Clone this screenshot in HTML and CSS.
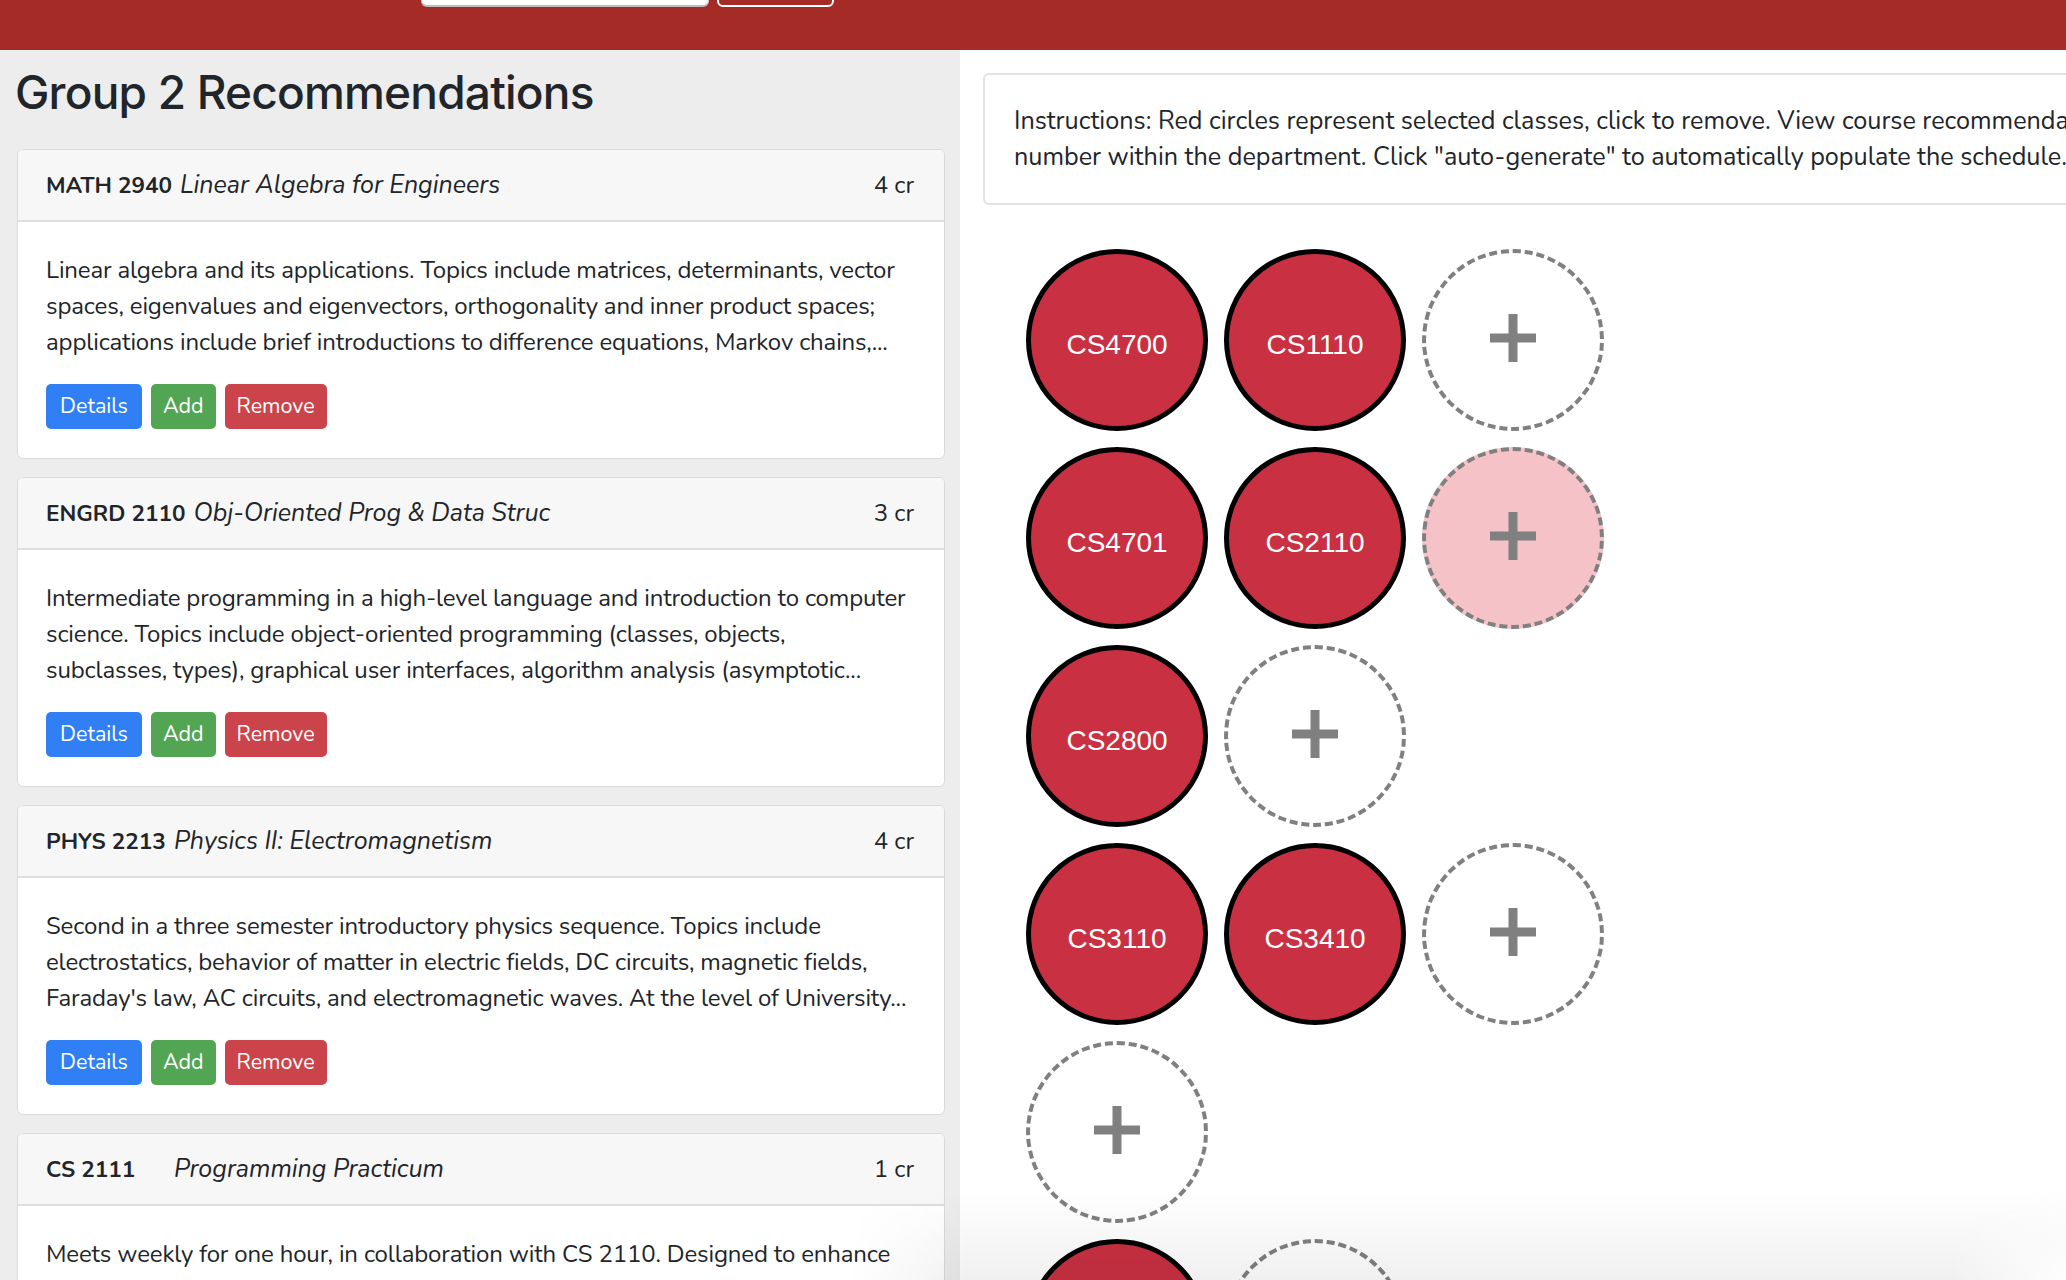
FILE: index.html
```html
<!DOCTYPE html>
<html lang="en">
<head>
<meta charset="utf-8">
<title>Group 2 Recommendations</title>
<link rel="stylesheet" href="styles.css">
</head>
<body>
<nav class="navbar">
  <form class="nav-form">
    <input class="nav-input" type="text" aria-label="Search">
    <button class="nav-btn" type="button" aria-label="Search"></button>
  </form>
</nav>
<div class="main">
  <section class="left">
    <h2 class="title">Group 2 Recommendations</h2>

    <div class="card">
      <div class="card-header">
        <span class="code">MATH 2940</span><span class="name">Linear Algebra for Engineers</span>
        <span class="cr">4 cr</span>
      </div>
      <div class="card-body">
        <p class="desc">Linear algebra and its applications. Topics include matrices, determinants, vector spaces, eigenvalues and eigenvectors, orthogonality and inner product spaces; applications include brief introductions to difference equations, Markov chains,...</p>
        <div class="actions">
          <button class="btn btn-blue" type="button">Details</button>
          <button class="btn btn-green" type="button">Add</button>
          <button class="btn btn-red" type="button">Remove</button>
        </div>
      </div>
    </div>

    <div class="card">
      <div class="card-header">
        <span class="code">ENGRD 2110</span><span class="name">Obj-Oriented Prog &amp; Data Struc</span>
        <span class="cr">3 cr</span>
      </div>
      <div class="card-body">
        <p class="desc">Intermediate programming in a high-level language and introduction to computer science. Topics include object-oriented programming (classes, objects, subclasses, types), graphical user interfaces, algorithm analysis (asymptotic...</p>
        <div class="actions">
          <button class="btn btn-blue" type="button">Details</button>
          <button class="btn btn-green" type="button">Add</button>
          <button class="btn btn-red" type="button">Remove</button>
        </div>
      </div>
    </div>

    <div class="card">
      <div class="card-header">
        <span class="code">PHYS 2213</span><span class="name">Physics II: Electromagnetism</span>
        <span class="cr">4 cr</span>
      </div>
      <div class="card-body">
        <p class="desc">Second in a three semester introductory physics sequence. Topics include electrostatics, behavior of matter in electric fields, DC circuits, magnetic fields, Faraday's law, AC circuits, and electromagnetic waves. At the level of University...</p>
        <div class="actions">
          <button class="btn btn-blue" type="button">Details</button>
          <button class="btn btn-green" type="button">Add</button>
          <button class="btn btn-red" type="button">Remove</button>
        </div>
      </div>
    </div>

    <div class="card">
      <div class="card-header">
        <span class="code">CS 2111</span><span class="name">Programming Practicum</span>
        <span class="cr">1 cr</span>
      </div>
      <div class="card-body">
        <p class="desc">Meets weekly for one hour, in collaboration with CS 2110. Designed to enhance understanding of the material in CS 2110 through additional practice and discussion.</p>
      </div>
    </div>
  </section>

  <section class="right">
    <div class="info">
      <p class="info-text">Instructions: Red circles represent selected classes, click to remove. View course recommendations for an empty slot by clicking on it, sorted by course<br>number within the department. Click "auto-generate" to automatically populate the schedule.</p>
    </div>

    <div class="plan">
      <div class="sem">
        <div class="circ sel">CS4700</div>
        <div class="circ sel">CS1110</div>
        <div class="circ slot"><svg class="plus" viewBox="0 0 46 48"><rect x="0" y="19.5" width="46" height="9"/><rect x="18.5" y="0" width="9" height="48"/></svg></div>
      </div>
      <div class="sem">
        <div class="circ sel">CS4701</div>
        <div class="circ sel">CS2110</div>
        <div class="circ slot active"><svg class="plus" viewBox="0 0 46 48"><rect x="0" y="19.5" width="46" height="9"/><rect x="18.5" y="0" width="9" height="48"/></svg></div>
      </div>
      <div class="sem">
        <div class="circ sel">CS2800</div>
        <div class="circ slot"><svg class="plus" viewBox="0 0 46 48"><rect x="0" y="19.5" width="46" height="9"/><rect x="18.5" y="0" width="9" height="48"/></svg></div>
      </div>
      <div class="sem">
        <div class="circ sel">CS3110</div>
        <div class="circ sel">CS3410</div>
        <div class="circ slot"><svg class="plus" viewBox="0 0 46 48"><rect x="0" y="19.5" width="46" height="9"/><rect x="18.5" y="0" width="9" height="48"/></svg></div>
      </div>
      <div class="sem">
        <div class="circ slot"><svg class="plus" viewBox="0 0 46 48"><rect x="0" y="19.5" width="46" height="9"/><rect x="18.5" y="0" width="9" height="48"/></svg></div>
      </div>
      <div class="sem">
        <div class="circ sel">CS4410</div>
        <div class="circ slot"><svg class="plus" viewBox="0 0 46 48"><rect x="0" y="19.5" width="46" height="9"/><rect x="18.5" y="0" width="9" height="48"/></svg></div>
      </div>
    </div>
  </section>
</div>
<div class="fade"></div>
</body>
</html>
```

FILE: styles.css
```css
html, body {
  margin: 0;
  padding: 0;
  height: 100%;
  overflow: hidden;
}

body {
  font-family: "Nunito", "Lato", "Open Sans", sans-serif;
  color: #212529;
  background: #ffffff;
}

.navbar {
  height: 50px;
  background: #a52b26;
  display: flex;
  align-items: flex-start;
  padding-left: 421px;
  box-sizing: border-box;
  overflow: hidden;
}

.nav-form {
  display: flex;
  gap: 8px;
  margin-top: -40px;
}

.nav-input {
  width: 288px;
  height: 47px;
  box-sizing: border-box;
  border: 1px solid #c8c8c8;
  border-bottom: 2px solid #bdbdbd;
  border-radius: 6px;
  background: #ffffff;
  margin: 0;
}

.nav-btn {
  width: 117px;
  height: 47px;
  box-sizing: border-box;
  border: 2px solid #ffffff;
  border-radius: 6px;
  background: transparent;
  margin: 0;
}

.main {
  display: flex;
  height: 1230px;
}

.left {
  width: 960px;
  flex: 0 0 960px;
  box-sizing: border-box;
  background: #ededed;
  padding: 0 15px 0 17px;
  overflow: hidden;
}

.title {
  font-family: "Inter", "Liberation Sans", sans-serif;
  font-weight: 500;
  font-size: 46px;
  line-height: 57px;
  letter-spacing: -0.8px;
  margin: 14px 0 28px -2px;
  color: #212529;
}

.card {
  background: #ffffff;
  border: 1px solid #dadada;
  border-radius: 6px;
  margin-bottom: 18px;
  overflow: hidden;
}

.card-header {
  display: flex;
  align-items: baseline;
  background: #f7f7f7;
  border-bottom: 2px solid #dedede;
  padding: 17px 30px 16px 28px;
  line-height: 36px;
  font-size: 25px;
}

.code {
  font-weight: 700;
  font-size: 22.5px;
  min-width: 120px;
  margin-right: 8px;
}

.name {
  font-style: italic;
  flex: 1;
}

.cr {
  font-size: 24px;
}

.card-body {
  padding: 30px 34px 29px 28px;
}

.desc {
  margin: 0 0 24px;
  font-size: 24px;
  line-height: 36px;
  letter-spacing: -0.15px;
}

.actions {
  display: flex;
  gap: 9px;
}

.btn {
  font-family: "Nunito", "Lato", "Open Sans", sans-serif;
  font-size: 21.5px;
  line-height: 31px;
  padding: 7px 14px;
  border: 0;
  border-radius: 5px;
  color: #ffffff;
  margin: 0;
}

.btn-green { padding: 7px 12px; }

.btn-blue { background: #307ff4; }
.btn-green { background: #52a552; }
.btn-red { background: #cb444b; padding: 7px 12px; }

.right {
  flex: 1;
  min-width: 0;
  background: #ffffff;
  padding: 23px 0 0 23px;
  overflow: hidden;
}

.info {
  width: 1500px;
  box-sizing: border-box;
  border: 2px solid #e2e2e2;
  border-radius: 6px;
  padding: 28px 30px 28px 29px;
}

.info-text {
  margin: 0;
  font-size: 25.2px;
  line-height: 36px;
  white-space: nowrap;
}

.plan {
  display: flex;
  flex-direction: column;
  gap: 16px;
  margin: 44px 0 0 43px;
}

.sem {
  display: flex;
  gap: 16px;
}

.circ {
  width: 182px;
  height: 182px;
  flex: 0 0 182px;
  box-sizing: border-box;
  border-radius: 50%;
  display: flex;
  align-items: center;
  justify-content: center;
}

.sel {
  background: #c93142;
  border: 5px solid #000000;
  color: #ffffff;
  font-family: "Liberation Sans", Arial, sans-serif;
  font-size: 28px;
  padding-top: 10px;
}

.slot {
  border: 4px dashed #808080;
  background: #ffffff;
}

.slot.active {
  background: #f5c2c8;
}

.plus {
  width: 46px;
  height: 48px;
  fill: #808080;
  margin-top: -4px;
}

.fade {
  position: fixed;
  left: 850px;
  right: 0;
  bottom: 0;
  height: 90px;
  pointer-events: none;
  background:
    radial-gradient(ellipse 120px 90px at 100% 100%, rgba(255,255,255,0.9), rgba(255,255,255,0) 100%),
    linear-gradient(to bottom, rgba(0,0,0,0), rgba(0,0,0,0.06));
  -webkit-mask-image: linear-gradient(to right, transparent 0, #000 120px);
  mask-image: linear-gradient(to right, transparent 0, #000 120px);
}
```
